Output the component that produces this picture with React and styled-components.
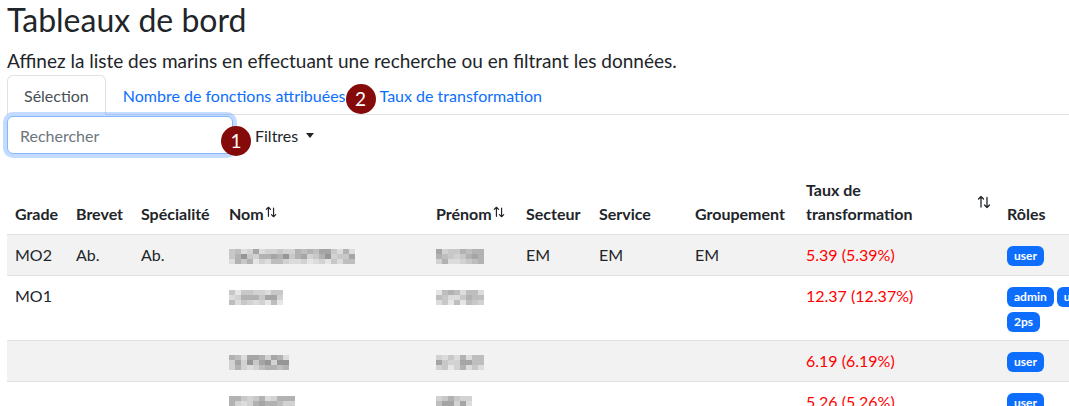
import styled, { createGlobalStyle } from "styled-components";

const GlobalStyle = createGlobalStyle`
  html, body {
    margin: 0;
    padding: 0;
    background: #fff;
    overflow: hidden;
  }
  body {
    font-family: Lato, "Noto Sans", sans-serif;
    font-size: 16px;
    line-height: 24px;
    color: #212529;
  }
  * { box-sizing: border-box; }
`;

const Page = styled.div`
  width: 1069px;
  padding-left: 7px;
  overflow: hidden;
`;

const Title = styled.h1`
  margin: 1px 0 0;
  font-size: 32px;
  font-weight: 400;
  line-height: 1.2;
`;

const Lead = styled.p`
  margin: 11px 0 0;
  font-size: 19px;
  font-weight: 400;
  line-height: 1.2;
  white-space: nowrap;
`;

const Tabs = styled.ul`
  display: flex;
  list-style: none;
  margin: 2px 0 0;
  padding: 0;
  border-bottom: 1px solid #dee2e6;
`;

const TabItem = styled.li`
  position: relative;
  margin-bottom: -1px;
`;

const TabLink = styled.a`
  display: block;
  padding: 8px 16px 6px;
  font-size: 16px;
  line-height: 24px;
  border: 1px solid transparent;
  border-radius: 6px 6px 0 0;
  text-decoration: none;
  color: ${(p) => (p.$active ? "#495057" : "#0d6efd")};
  background: ${(p) => (p.$active ? "#fff" : "transparent")};
  border-color: ${(p) => (p.$active ? "#dee2e6 #dee2e6 #fff" : "transparent")};
  cursor: pointer;
`;

const Marker = styled.span`
  position: absolute;
  width: 30px;
  height: 30px;
  border-radius: 50%;
  background: #850b0b;
  color: #fff;
  font-size: 19px;
  line-height: 30px;
  text-align: center;
  z-index: 2;
`;

const TabMarker = styled(Marker)`
  top: 9px;
  right: -13px;
`;

const Toolbar = styled.div`
  position: relative;
  display: flex;
  align-items: center;
  gap: 9px;
  margin-top: 1px;
`;

const SearchInput = styled.input`
  width: 226px;
  height: 38px;
  padding: 6px 12px;
  font-family: inherit;
  font-size: 16px;
  color: #212529;
  border: 1px solid #86b7fe;
  border-radius: 6px;
  outline: none;
  box-shadow: 0 0 0 4px rgba(13, 110, 253, 0.25);
  &::placeholder {
    color: #6c757d;
  }
`;

const SearchMarker = styled(Marker)`
  left: 214px;
  top: 10px;
`;

const FilterButton = styled.button`
  display: flex;
  align-items: center;
  height: 38px;
  padding: 6px 12px;
  font-family: inherit;
  font-size: 16px;
  color: #212529;
  background: transparent;
  border: 1px solid transparent;
  cursor: pointer;
  &::after {
    content: "";
    margin-left: 8px;
    border-top: 5px solid #212529;
    border-left: 4px solid transparent;
    border-right: 4px solid transparent;
  }
`;

const Table = styled.table`
  margin-top: 16px;
  width: 1112px;
  table-layout: fixed;
  border-collapse: collapse;
`;

const Th = styled.th`
  padding: 8px;
  text-align: left;
  vertical-align: bottom;
  font-weight: 700;
  white-space: nowrap;
  border-bottom: 1px solid #dee2e6;
`;

const ThSplit = styled.div`
  display: flex;
  align-items: center;
  justify-content: space-between;
  white-space: normal;
`;

const ThWrap = styled.span`
  width: 130px;
`;

const Row = styled.tr`
  background: ${(p) => (p.$striped ? "#f2f2f2" : "#fff")};
`;

const Td = styled.td`
  padding: 8px;
  vertical-align: top;
  border-bottom: 1px solid #dee2e6;
  white-space: nowrap;
`;

const Rate = styled.span`
  color: #ff0000;
`;

const Badges = styled.div`
  display: flex;
  flex-wrap: wrap;
  gap: 5px 3px;
  padding-top: 3px;
  width: 90px;
  white-space: nowrap;
`;

const Badge = styled.span`
  flex: none;
  display: inline-block;
  padding: 4px 7px;
  font-size: 12px;
  font-weight: 700;
  line-height: 12px;
  color: #fff;
  background: #0d6efd;
  border-radius: 6px;
`;

const Sort = styled.svg`
  flex: none;
  vertical-align: top;
  margin-top: ${(p) => (p.$small ? "4px" : "0")};
  margin-left: ${(p) => (p.$small ? "1px" : "0")};
`;

const Mosaic = styled.div`
  display: grid;
  grid-template-columns: repeat(${(p) => p.$cols}, 6px);
  grid-auto-rows: 5px;
  margin-top: 6px;
`;

const Pix = styled.span`
  background: rgb(${(p) => p.$s}, ${(p) => p.$s}, ${(p) => p.$s});
`;

const SortIcon = ({ small }) => {
  const s = small ? 12 : 14;
  return (
    <Sort $small={small} width={s} height={s} viewBox="0 0 14 14" fill="none" stroke="#212529" strokeWidth={small ? 1.4 : 1.3} strokeLinecap="round" strokeLinejoin="round">
      <path d="M4 12V1.5M1.5 4L4 1.5L6.5 4" />
      <path d="M10 2.5V12.5M7.5 10L10 12.5L12.5 10" />
    </Sort>
  );
};

const shades = [150, 165, 178, 190, 200, 210, 220, 230];

const Blur = ({ width, seed, light }) => {
  const cols = Math.round(width / 6);
  let x = seed * 9301 + 49297;
  const cells = [];
  for (let r = 0; r < 3; r++) {
    for (let c = 0; c < cols; c++) {
      x = (x * 9301 + 49297) % 233280;
      let i = Math.floor((x / 233280) * 6);
      if (r === 0) i = Math.min(shades.length - 1, i + 1);
      if (r === 2) i = Math.min(shades.length - 1, i + 2);
      if (light) i = Math.min(shades.length - 1, i + 1);
      cells.push(<Pix key={r + "-" + c} $s={shades[i]} />);
    }
  }
  return <Mosaic $cols={cols}>{cells}</Mosaic>;
};

const rows = [
  { grade: "MO2", brevet: "Ab.", spec: "Ab.", nom: 126, prenom: 50, sect: "EM", serv: "EM", grp: "EM", rate: "5.39 (5.39%)", roles: ["user"] },
  { grade: "MO1", brevet: "", spec: "", nom: 54, prenom: 50, sect: "", serv: "", grp: "", rate: "12.37 (12.37%)", roles: ["admin", "user", "2ps"] },
  { grade: "", brevet: "", spec: "", nom: 60, prenom: 50, sect: "", serv: "", grp: "", rate: "6.19 (6.19%)", roles: ["user"] },
  { grade: "", brevet: "", spec: "", nom: 66, prenom: 36, sect: "", serv: "", grp: "", rate: "5.26 (5.26%)", roles: ["user"] },
];

const widths = [61, 65, 88, 207, 90, 73, 96, 111, 201, 120];

export default function App() {
  return (
    <Page>
      <GlobalStyle />
      <Title>Tableaux de bord</Title>
      <Lead>Affinez la liste des marins en effectuant une recherche ou en filtrant les données.</Lead>
      <Tabs>
        <TabItem>
          <TabLink $active>Sélection</TabLink>
        </TabItem>
        <TabItem>
          <TabLink>Nombre de fonctions attribuées</TabLink>
          <TabMarker>2</TabMarker>
        </TabItem>
        <TabItem>
          <TabLink>Taux de transformation</TabLink>
        </TabItem>
      </Tabs>
      <Toolbar>
        <SearchInput placeholder="Rechercher" />
        <SearchMarker>1</SearchMarker>
        <FilterButton>Filtres</FilterButton>
      </Toolbar>
      <Table>
        <colgroup>
          {widths.map((w, i) => (
            <col key={i} style={{ width: w }} />
          ))}
        </colgroup>
        <thead>
          <tr>
            <Th>Grade</Th>
            <Th>Brevet</Th>
            <Th>Spécialité</Th>
            <Th>
              Nom
              <SortIcon small />
            </Th>
            <Th>
              Prénom
              <SortIcon small />
            </Th>
            <Th>Secteur</Th>
            <Th>Service</Th>
            <Th>Groupement</Th>
            <Th>
              <ThSplit>
                <ThWrap>Taux de transformation</ThWrap>
                <SortIcon />
              </ThSplit>
            </Th>
            <Th>Rôles</Th>
          </tr>
        </thead>
        <tbody>
          {rows.map((r, i) => (
            <Row key={i} $striped={i % 2 === 0}>
              <Td>{r.grade}</Td>
              <Td>{r.brevet}</Td>
              <Td>{r.spec}</Td>
              <Td>
                <Blur width={r.nom} seed={i * 7 + 1} light={i % 2 === 1} />
              </Td>
              <Td>
                <Blur width={r.prenom} seed={i * 7 + 4} light={i % 2 === 1} />
              </Td>
              <Td>{r.sect}</Td>
              <Td>{r.serv}</Td>
              <Td>{r.grp}</Td>
              <Td>
                <Rate>{r.rate}</Rate>
              </Td>
              <Td>
                <Badges>
                  {r.roles.map((role) => (
                    <Badge key={role}>{role}</Badge>
                  ))}
                </Badges>
              </Td>
            </Row>
          ))}
        </tbody>
      </Table>
    </Page>
  );
}
